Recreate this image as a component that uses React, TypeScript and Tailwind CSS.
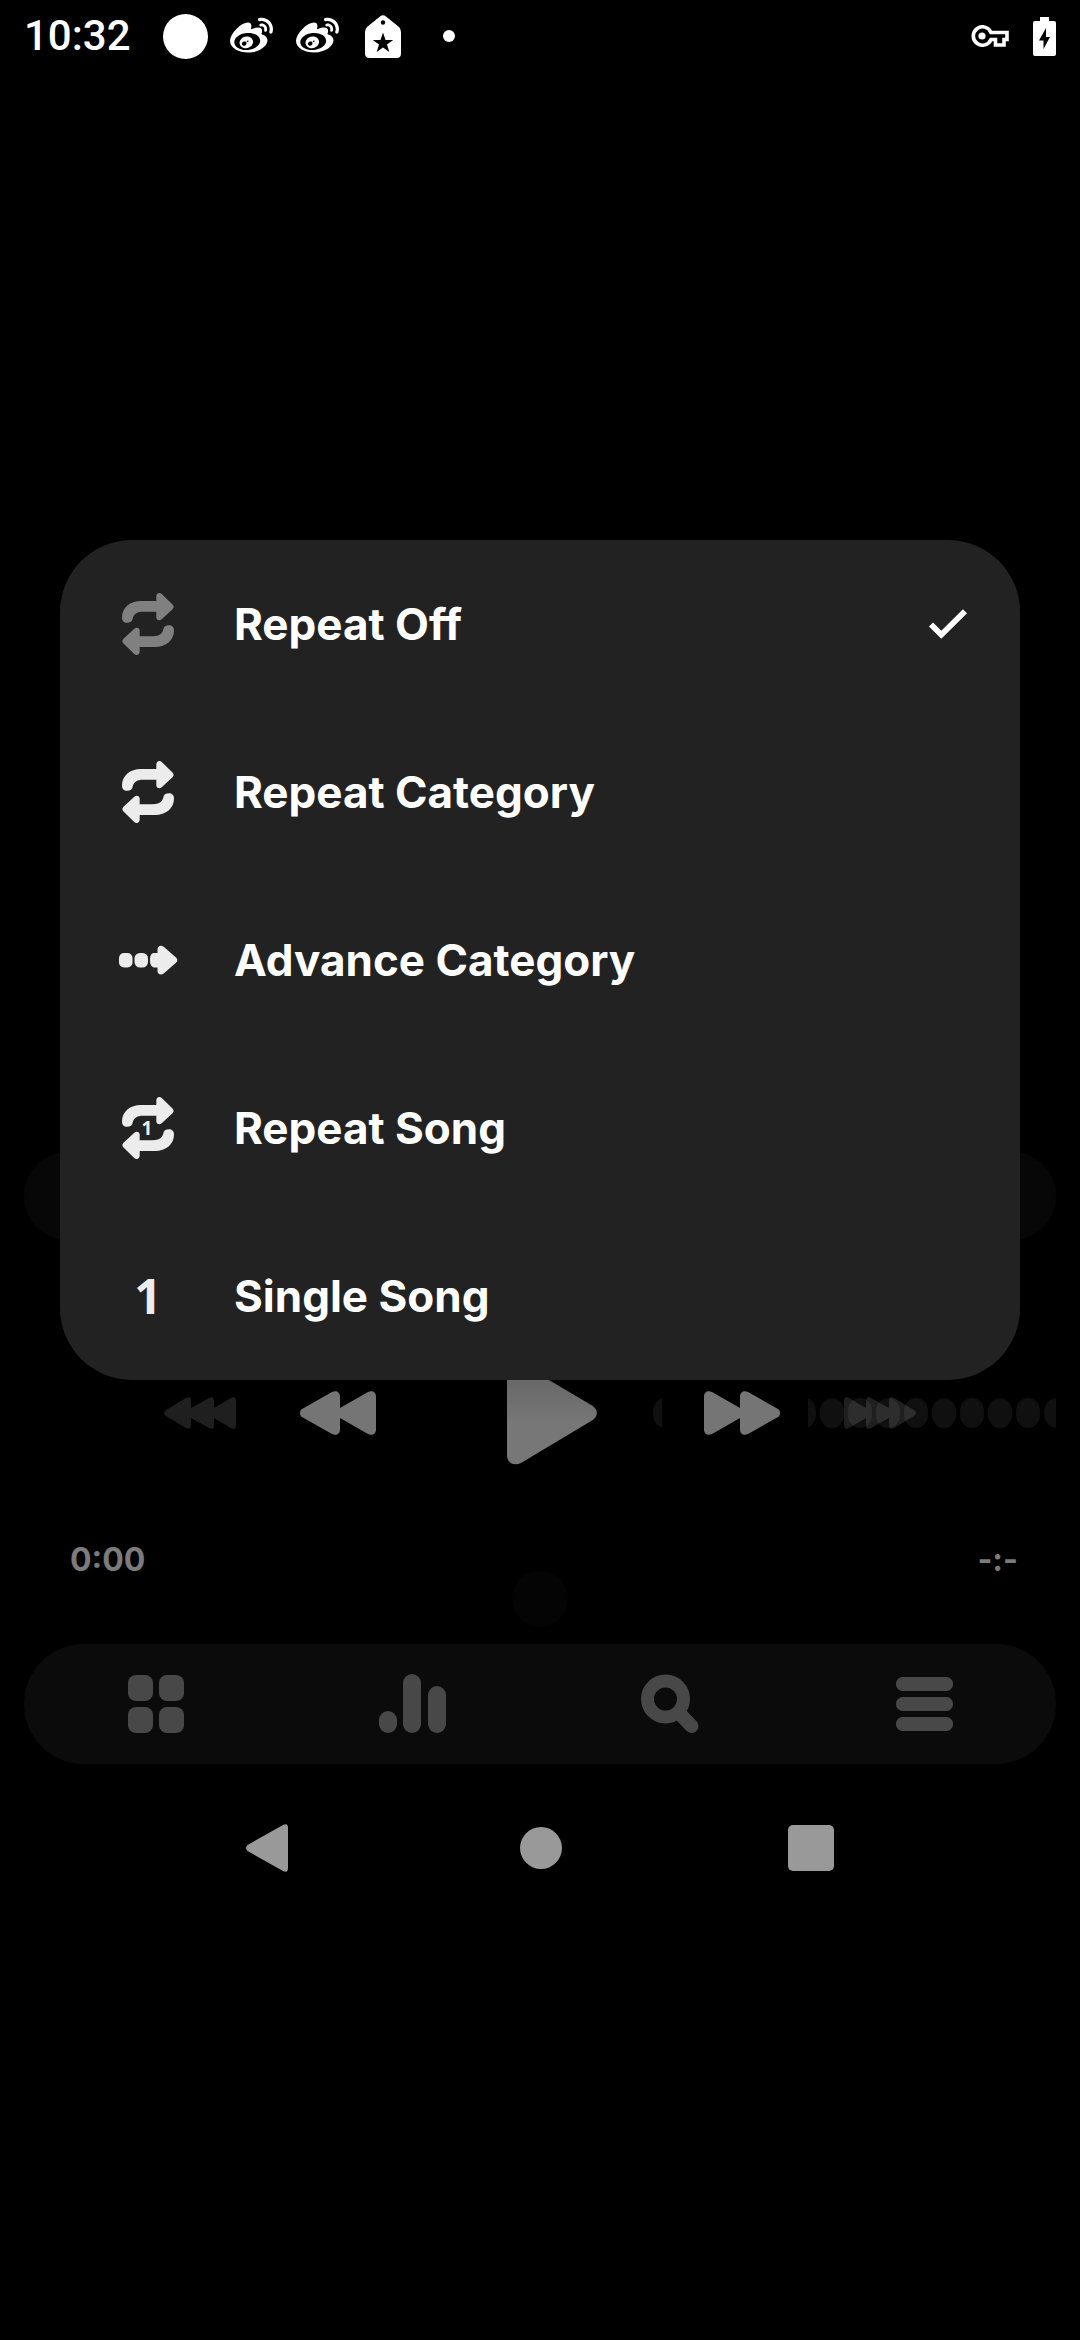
import React from "react";
import { FaWeibo } from "react-icons/fa";

const REPEAT_ARROW =
  "M5 29.700C2 29.700 0 27.700 0 24.700C0 14.500 8 8 19 8H34.300V4C34.300 0 37.500 -1.200 40 1.300L50.500 11.500C52 13 52 14.600 50.500 16.200L40 26C37.500 28.300 34.300 27.300 34.300 24V18.800H21C14.500 18.800 11.500 21.500 10.600 26C10.200 28.300 8.500 29.700 5 29.700Z";

function RepeatIcon({ one = false }: { one?: boolean }) {
  return (
    <svg viewBox="0 0 52 62" className="h-[62px] w-[52px]" fill="currentColor" aria-hidden="true">
      <path d={REPEAT_ARROW} />
      <path d={REPEAT_ARROW} transform="rotate(180 26 31)" />
      {one && (
        <text x="25" y="38" textAnchor="middle" fontSize="19" fontWeight="700" fontFamily="Open Sans, sans-serif">
          1
        </text>
      )}
    </svg>
  );
}

function AdvanceIcon() {
  return (
    <svg viewBox="0 0 60 30" className="h-[30px] w-[60px]" fill="currentColor" aria-hidden="true">
      <rect x="1" y="8" width="13.5" height="14.5" rx="5" />
      <rect x="16.5" y="8" width="13.5" height="14.5" rx="5.5" />
      <path d="M36 8H39.5V4.5C39.5 1 43 -0.5 46 2L58 12.5C59.8 14 59.8 16.2 58 17.8L46 28.2C43 30.6 39.5 29.3 39.5 26V22.5H37C34 22.5 32 20 32 15.2C32 10.5 33.5 8 36 8Z" />
    </svg>
  );
}

function CheckIcon() {
  return (
    <svg viewBox="0 0 40 30" className="h-[30px] w-[40px]" fill="none" aria-hidden="true">
      <path d="M3 15.5L13.3 25.7L37 2.2" stroke="white" strokeWidth="5.8" />
    </svg>
  );
}

function SkipIcon({ count }: { count: 2 | 3 }) {
  // Left-pointing rounded triangles standing side by side.
  return count === 2 ? (
    <svg viewBox="0 0 76 44" className="h-[44px] w-[76px]" fill="currentColor" aria-hidden="true">
      <path d="M2 18L32 1C36 -1 40 1 40 5.500V17L68 1C72 -1 76 1 76 5.500V38.500C76 43 72 45 68 43L40 27V38.500C40 43 36 45 32 43L2 26C-0.800 24 -0.800 20 2 18Z" />
    </svg>
  ) : (
    <svg viewBox="0 0 72 32" className="h-[32px] w-[72px]" fill="currentColor" aria-hidden="true">
      <path d="M2 13L22 1C25 -0.800 27 1 27 4V11L45 1C48 -0.800 50 1 50 4V11L67 1C70 -0.800 72 1 72 4V28C72 31 70 32.800 67 31L50 21V28C50 31 48 32.800 45 31L27 21V28C27 31 25 32.800 22 31L2 19C-0.600 17 -0.600 15 2 13Z" />
    </svg>
  );
}

function WaveBar() {
  return (
    <svg viewBox="0 0 416 30" className="absolute top-1/2 right-6 h-[30px] w-[416px] -translate-y-1/2" fill="#101010" aria-hidden="true">
      <path d="M22 0.500V29.500C16 28 13 22 13 15S16 2 22 0.500Z" />
      <path d="M168 0.500V29.500C173 28 176 22 176 15S173 2 168 0.500Z" />
      {[180, 208, 236, 264, 292, 320, 348, 376].map((x) => (
        <rect key={x} x={x} y="0" width="24" height="30" rx="12" ry="13" />
      ))}
      <path d="M416 0V30C408 29 404 22 404 15S408 1 416 0Z" />
    </svg>
  );
}

const options = [
  { label: "Repeat Off", icon: <RepeatIcon />, tone: "text-[#808080]", checked: true },
  { label: "Repeat Category", icon: <RepeatIcon />, tone: "text-[#ececec]", checked: false },
  { label: "Advance Category", icon: <AdvanceIcon />, tone: "text-[#ececec]", checked: false },
  { label: "Repeat Song", icon: <RepeatIcon one />, tone: "text-[#ececec]", checked: false },
  {
    label: "Single Song",
    icon: <span className="font-['Open_Sans',sans-serif] text-[48px] leading-none font-bold" aria-hidden="true">1</span>,
    tone: "text-[#ececec]",
    checked: false,
  },
];

function StatusBar() {
  return (
    <header className="flex h-[72px] items-center justify-between px-6 text-white">
      <div className="flex items-center">
        <time className="w-[128px] font-[Roboto,sans-serif] text-[42px] leading-none font-medium">10:32</time>
        <span className="flex w-[66px] justify-center"><i className="size-[45px] rounded-full bg-white" /></span>
        <span className="flex w-[66px] justify-center"><FaWeibo className="size-[43px]" /></span>
        <span className="flex w-[66px] justify-center"><FaWeibo className="size-[43px]" /></span>
        <span className="flex w-[66px] justify-center">
          <svg viewBox="0 0 36 43" className="h-[43px] w-[36px]" aria-hidden="true">
            <path fill="white" d="M15 1.500Q18 -1 21 1.500L34 12Q36 14 36 17V38.500Q36 43 31.500 43H4.500Q0 43 0 38.500V17Q0 14 2 12Z" />
            <circle cx="18" cy="7.500" r="2.200" fill="black" />
            <path fill="black" d="M18 17.500L20.500 25H28.200L22 29.600L24.300 37L18 32.500L11.700 37L14 29.600L7.800 25H15.500Z" />
          </svg>
        </span>
        <span className="flex w-[66px] justify-center"><i className="size-3 rounded-full bg-white" /></span>
      </div>
      <div className="flex items-center gap-6">
        <svg viewBox="0 0 38 22" className="h-[22px] w-[38px]" fill="none" aria-hidden="true">
          <path stroke="white" strokeWidth="3.600" d="M20 7.500H36V14.500H33V20H24.500V14.500H20A9.200 9.200 0 1 1 20 7.500Z" />
          <circle cx="11" cy="11" r="3.600" fill="white" />
        </svg>
        <svg viewBox="0 0 23 39" className="h-[39px] w-[23px]" aria-hidden="true">
          <path fill="white" d="M7 0H16V4H21Q23 4 23 6V37Q23 39 21 39H2Q0 39 0 37V6Q0 4 2 4H7Z" />
          <path fill="black" d="M13 11V20H17L10.500 32V23.500H6Z" />
        </svg>
      </div>
    </header>
  );
}

function Player() {
  return (
    <main>
      <div className="h-[1080px]" />
      <div className="mx-6 h-[88px] rounded-full bg-[#070707]" />
      <section className="relative mt-[121px] flex h-[104px] items-center justify-between px-[164px]">
        <WaveBar />
        <div className="relative flex items-center gap-16">
          <button aria-label="Previous category" className="text-[#1f1f1f]"><SkipIcon count={3} /></button>
          <button aria-label="Previous track" className="text-[#757575]"><SkipIcon count={2} /></button>
        </div>
        <button aria-label="Play" className="relative">
          <svg viewBox="0 0 114 104" className="h-[104px] w-[114px]" aria-hidden="true">
            <defs>
              <linearGradient id="play" x1="0" y1="0" x2="0" y2="1">
                <stop offset="0" stopColor="#626262" />
                <stop offset="0.6" stopColor="#777777" />
                <stop offset="1" stopColor="#777777" />
              </linearGradient>
            </defs>
            <path fill="url(#play)" d="M24 9C24 1.500 31 -1.500 38 2.500L109 44.500C115.500 48.500 115.500 55.500 109 59.500L38 102C31 105.500 24 102 24 94.500Z" />
          </svg>
        </button>
        <div className="relative flex items-center gap-16">
          <button aria-label="Next track" className="rotate-180 text-[#757575]"><SkipIcon count={2} /></button>
          <button aria-label="Next category" className="rotate-180 text-white/12"><SkipIcon count={3} /></button>
        </div>
      </section>
      <div className="mt-[75px] flex h-10 items-center justify-between pr-[62px] pl-[70px] text-[32px] leading-10 font-bold text-[#7b7b7b]">
        <span>0:00</span>
        <span>-:-</span>
      </div>
      <div className="mx-auto mt-[-9px] size-14 rounded-full bg-[#040404]" />
      <nav className="mx-6 mt-[17px] grid h-[120px] grid-cols-4 place-items-center rounded-full bg-[#0b0b0b] px-1 text-[#484848]">
        <button aria-label="Library">
          <svg viewBox="0 0 56 58" className="h-[58px] w-[56px]" fill="currentColor" aria-hidden="true">
            <rect width="25" height="26" rx="8" /><rect x="31" width="25" height="26" rx="8" />
            <rect y="32" width="25" height="26" rx="8" /><rect x="31" y="32" width="25" height="26" rx="8" />
          </svg>
        </button>
        <button aria-label="Equalizer">
          <svg viewBox="0 0 67 60" className="h-[60px] w-[67px]" fill="currentColor" aria-hidden="true">
            <rect y="37" width="18" height="22" rx="9" /><rect x="24" y="0" width="18" height="59" rx="9" /><rect x="49" y="12" width="18" height="47" rx="9" />
          </svg>
        </button>
        <button aria-label="Search">
          <svg viewBox="-4 0 62 60" className="h-[60px] w-[62px]" fill="none" stroke="currentColor" aria-hidden="true">
            <circle cx="24.500" cy="25" r="18" strokeWidth="13" />
            <path d="M39 40L50.500 52" strokeWidth="14" strokeLinecap="round" />
          </svg>
        </button>
        <button aria-label="Menu">
          <svg viewBox="0 0 57 54" className="h-[54px] w-[57px]" fill="currentColor" aria-hidden="true">
            <rect width="57" height="14" rx="6.500" /><rect y="20" width="57" height="14" rx="6.500" /><rect y="40" width="57" height="14" rx="6.500" />
          </svg>
        </button>
      </nav>
    </main>
  );
}

function SystemNav() {
  return (
    <nav className="mt-3 flex h-[144px] items-center justify-between px-[246px] text-[#999999]">
      <button aria-label="Back">
        <svg viewBox="0 0 48 48" className="size-12" fill="currentColor" aria-hidden="true">
          <path d="M1.500 21L37.500 0.800Q42 -1 42 4V44Q42 49 37.500 47.200L1.500 27Q-1.500 24 1.500 21Z" />
        </svg>
      </button>
      <button aria-label="Home" className="size-[42px] rounded-full bg-[#999999]" />
      <button aria-label="Recents" className="size-[46px] rounded-[5px] bg-[#999999]" />
    </nav>
  );
}

export default function App() {
  return (
    <div className="min-h-screen bg-black font-[Inter,sans-serif]">
      <div className="relative">
        <StatusBar />
        <Player />
        <SystemNav />
        <div className="absolute inset-0 flex items-center px-[60px]">
          <div role="menu" aria-label="Repeat mode" className="w-full overflow-hidden rounded-[72px] bg-[#222222]">
            {options.map((o) => (
              <button
                key={o.label}
                role="menuitemradio"
                aria-checked={o.checked}
                className="flex h-[168px] w-full items-center pr-[52px] pl-12 text-left"
              >
                <span className={`flex w-20 justify-center ${o.tone}`}>{o.icon}</span>
                <span className="ml-[46px] flex-1 text-[44px] leading-none font-bold text-white">{o.label}</span>
                {o.checked && <CheckIcon />}
              </button>
            ))}
          </div>
        </div>
      </div>
    </div>
  );
}
